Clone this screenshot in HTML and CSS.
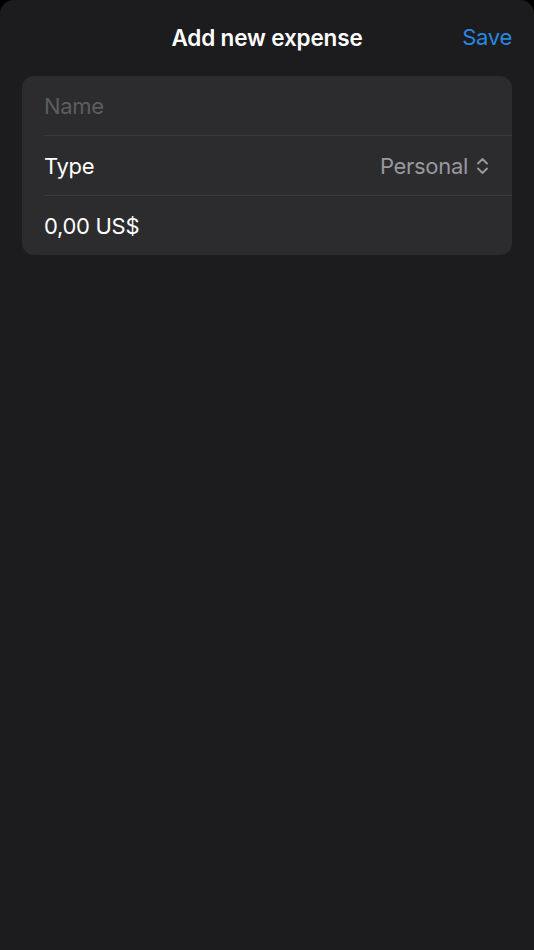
FILE: index.html
```html
<!DOCTYPE html>
<html lang="en">
<head>
    <meta charset="UTF-8">
    <meta name="viewport" content="width=device-width, initial-scale=1.0">
    <title>Add new expense</title>
    <link rel="stylesheet" href="styles.css">
</head>
<body>
    <div class="sheet">
        <div class="nav-bar">
            <span class="nav-spacer"></span>
            <h1 class="nav-title">Add new expense</h1>
            <button class="nav-save">Save</button>
        </div>

        <div class="form-group">
            <div class="form-row">
                <span class="placeholder">Name</span>
            </div>
            <div class="form-row">
                <span class="label">Type</span>
                <span class="picker">
                    Personal
                    <svg class="chevrons" width="13" height="18" viewBox="0 0 13 18" fill="none" stroke="currentColor" stroke-width="1.9" stroke-linecap="round" stroke-linejoin="round">
                        <path d="M2 6.5 L6.5 2 L11 6.5"/>
                        <path d="M2 11.5 L6.5 16 L11 11.5"/>
                    </svg>
                </span>
            </div>
            <div class="form-row">
                <span class="label">0,00 US$</span>
            </div>
        </div>
    </div>
</body>
</html>
```

FILE: styles.css
```css
html, body {
    margin: 0;
    padding: 0;
    background: #000;
}
body {
    font-family: Inter, "Noto Sans", sans-serif;
    width: 534px;
    height: 950px;
    overflow: hidden;
}
.sheet {
    height: 950px;
    background: #1c1c1e;
    border-radius: 14px 14px 0 0;
    padding: 0 22px;
    box-sizing: border-box;
}
.nav-bar {
    height: 76px;
    display: grid;
    grid-template-columns: 1fr auto 1fr;
    align-items: center;
}
.nav-title {
    margin: -2px 0 0;
    font-size: 22.5px;
    font-weight: 600;
    color: #fff;
    letter-spacing: -0.15px;
}
.nav-save {
    justify-self: end;
    margin-top: -2px;
    background: none;
    border: none;
    padding: 0;
    font-family: inherit;
    font-size: 22px;
    color: #2a86e0;
    letter-spacing: -0.3px;
}
.form-group {
    background: #2c2c2e;
    border-radius: 12px;
    overflow: hidden;
}
.form-row {
    height: 60px;
    box-sizing: border-box;
    margin-left: 22px;
    padding-right: 22px;
    display: flex;
    align-items: center;
    justify-content: space-between;
    border-bottom: 1px solid #3a3a3e;
    font-size: 22px;
    letter-spacing: -0.3px;
}
.form-row:last-child {
    border-bottom: none;
    height: 59px;
}
.placeholder {
    color: #5c5c61;
}
.label {
    color: #fff;
}
.picker {
    display: flex;
    align-items: center;
    gap: 8px;
    color: #98989e;
    margin-right: 1px;
}
.chevrons {
    display: block;
}
```
